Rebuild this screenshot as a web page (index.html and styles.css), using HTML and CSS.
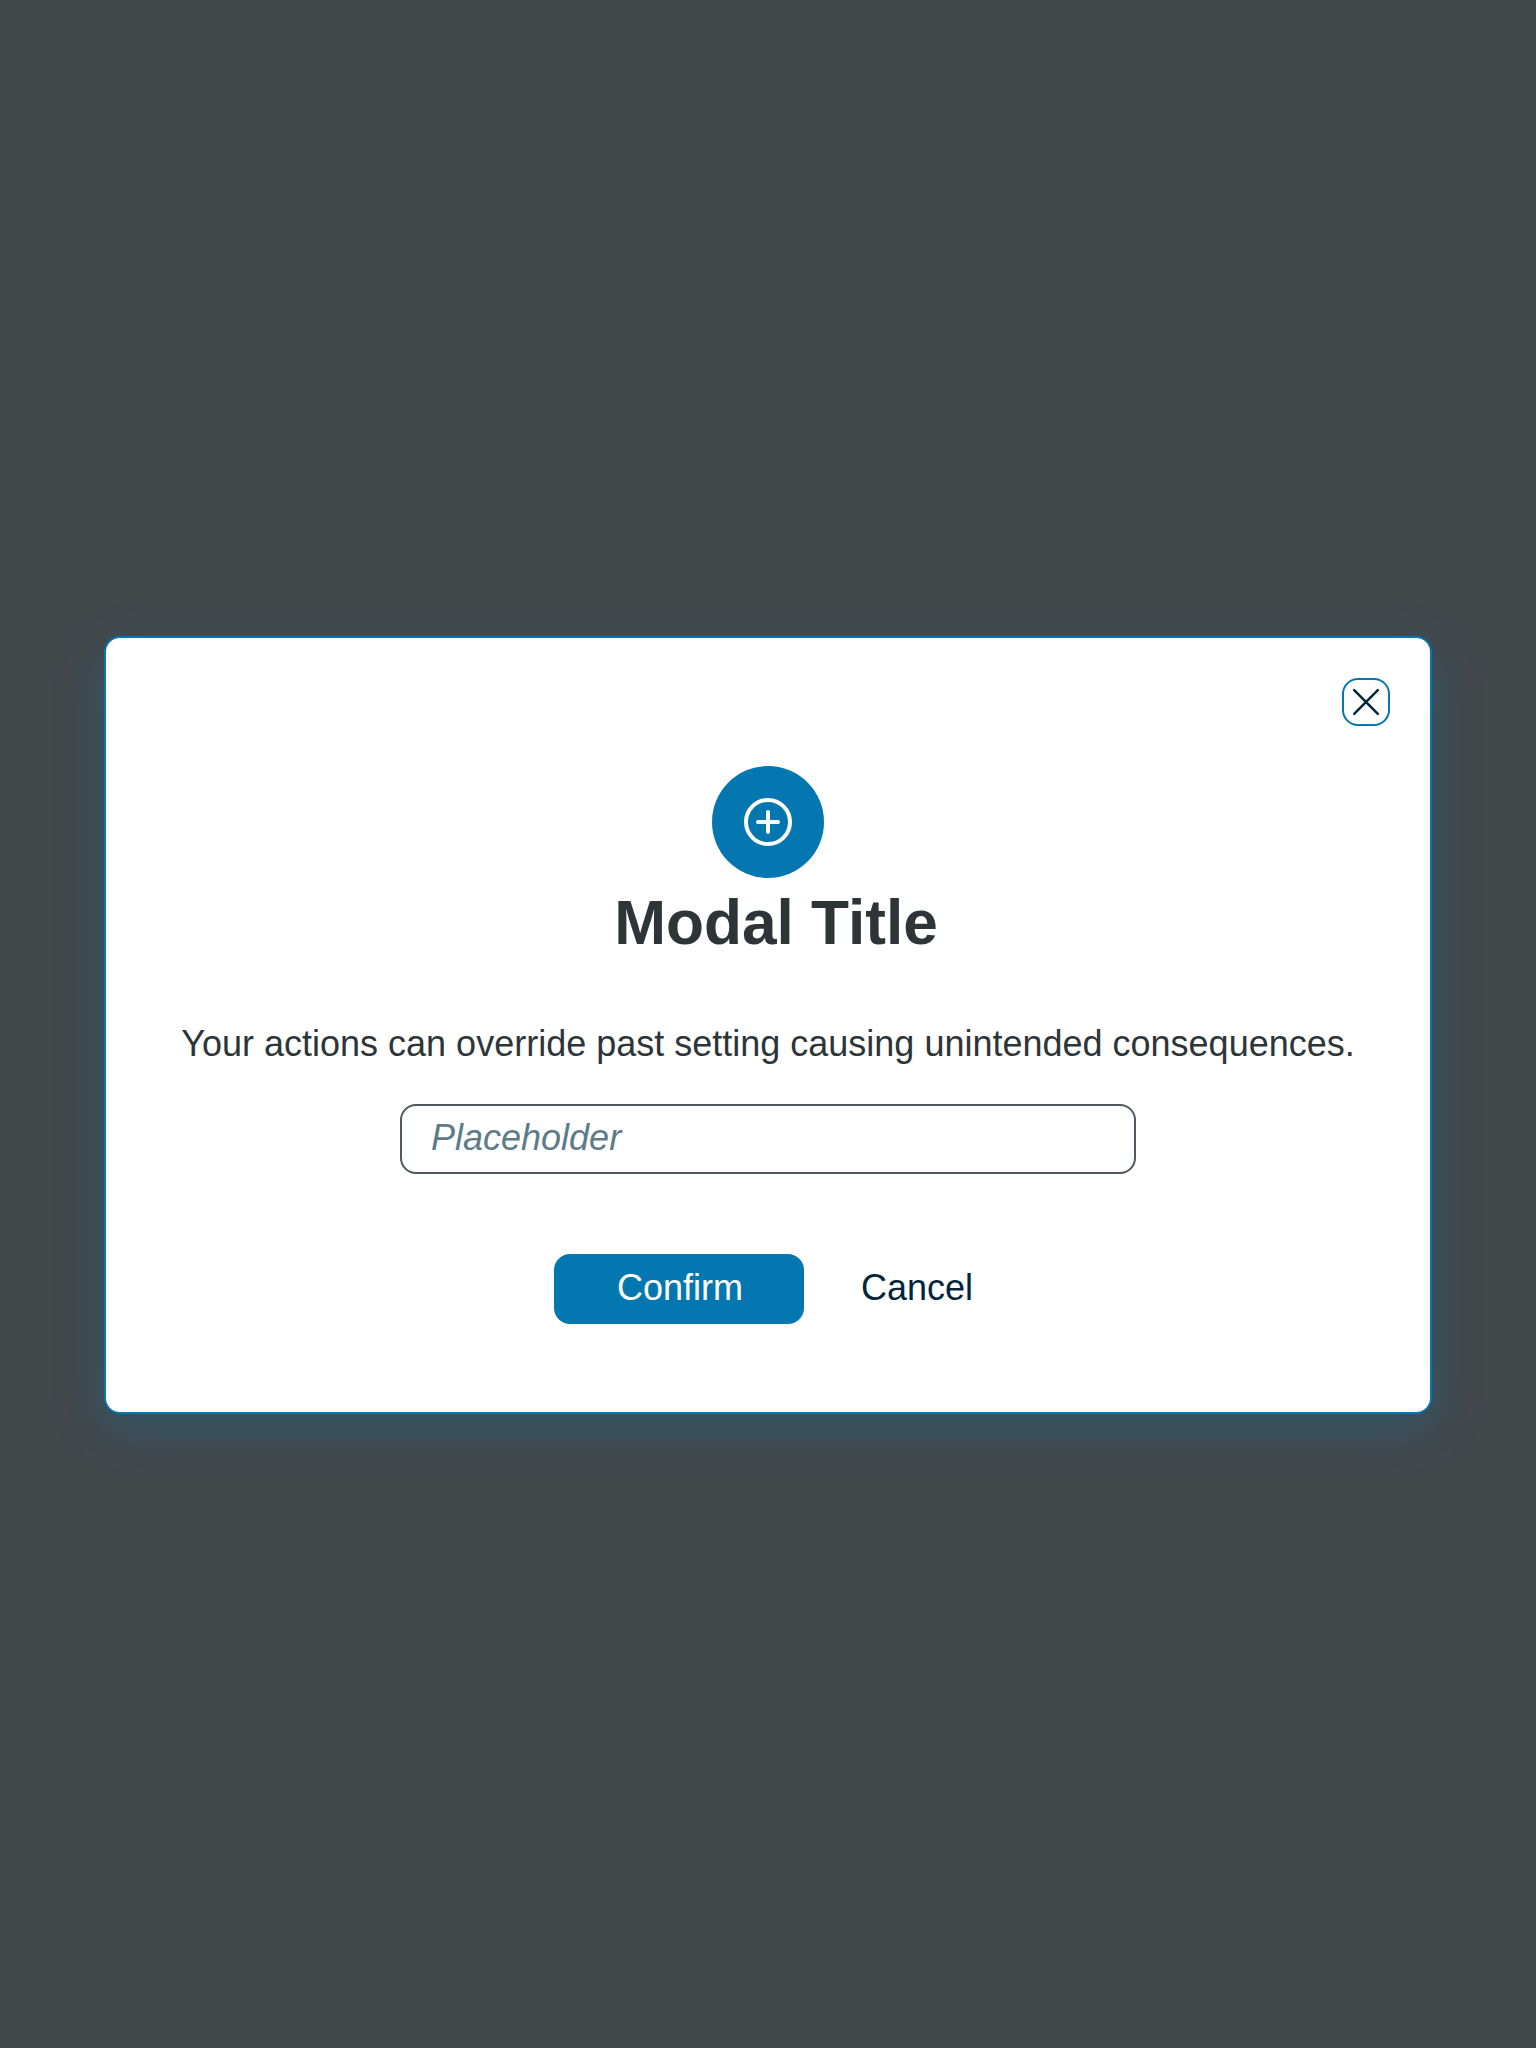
FILE: index.html
```html
<!DOCTYPE html>
<html lang="en">
<head>
<meta charset="utf-8">
<title>Modal</title>
<link rel="stylesheet" href="styles.css">
</head>
<body>
<main class="overlay">
  <section class="modal" role="dialog" aria-modal="true" aria-labelledby="title">
    <button class="close" aria-label="Close">
      <svg width="28" height="28" viewBox="0 0 28 28" fill="none" stroke="currentColor" stroke-width="2.5" stroke-linecap="round"><path d="M2.2 2.2 25.8 25.8M25.8 2.2 2.2 25.8"/></svg>
    </button>
    <div class="badge">
      <svg width="48" height="48" viewBox="0 0 48 48" fill="none" stroke="currentColor" stroke-width="4" stroke-linecap="round"><circle cx="24" cy="24" r="22"/><path d="M24 14v20M14 24h20"/></svg>
    </div>
    <h1 class="title" id="title">Modal Title</h1>
    <p class="message">Your actions can override past setting causing unintended consequences.</p>
    <input class="field" type="text" placeholder="Placeholder">
    <div class="actions">
      <button class="button confirm">Confirm</button>
      <button class="button cancel">Cancel</button>
    </div>
  </section>
</main>
</body>
</html>
```
FILE: styles.css
```css
* {
  box-sizing: border-box;
}

body {
  margin: 0;
  font-family: "Liberation Sans", Arial, sans-serif;
  font-size: 36px;
  color: #2d3538;
}

.overlay {
  min-height: 2048px;
  padding-top: 636px;
  background: #43484b;
}

.modal {
  display: flex;
  flex-direction: column;
  align-items: center;
  width: 1328px;
  height: 778px;
  margin: 0 auto;
  padding: 40px;
  border: 2px solid #0476b0;
  border-radius: 16px;
  background: #fff;
  box-shadow: 0 16px 48px rgba(4, 118, 176, 0.3);
}

.close {
  display: flex;
  align-items: center;
  justify-content: center;
  align-self: flex-end;
  width: 48px;
  height: 48px;
  padding: 0;
  border: 2px solid #0476b0;
  border-radius: 16px;
  background: #fff;
  color: #02253a;
}

.close svg,
.badge svg {
  flex: none;
}

.badge {
  display: flex;
  align-items: center;
  justify-content: center;
  width: 112px;
  height: 112px;
  margin-top: 40px;
  border-radius: 50%;
  background: #0476b0;
  color: #fff;
}

.title {
  margin: 9px 0 0 16px;
  font-size: 62.208px;
  line-height: 72px;
}

.message {
  margin: 63px 0 0;
  line-height: 44px;
  white-space: nowrap;
}

.field {
  width: 736px;
  height: 70px;
  margin-top: 38px;
  padding: 0 29px 2px;
  border: 2px solid #4d5a5f;
  border-radius: 16px;
  background: #fff;
  font: inherit;
}

.field::placeholder {
  color: #5d7b89;
  font-style: italic;
  opacity: 1;
}

.actions {
  display: flex;
  width: 428px;
  margin-top: 80px;
}

.button {
  height: 70px;
  padding: 0 0 2px;
  border: 0;
  border-radius: 16px;
  font: inherit;
}

.confirm {
  flex: none;
  width: 250px;
  padding-left: 2px;
  background: #0476b0;
  color: #fff;
}

.cancel {
  margin-left: 48px;
  width: 130px;
  background: none;
  color: #02253a;
}
```
